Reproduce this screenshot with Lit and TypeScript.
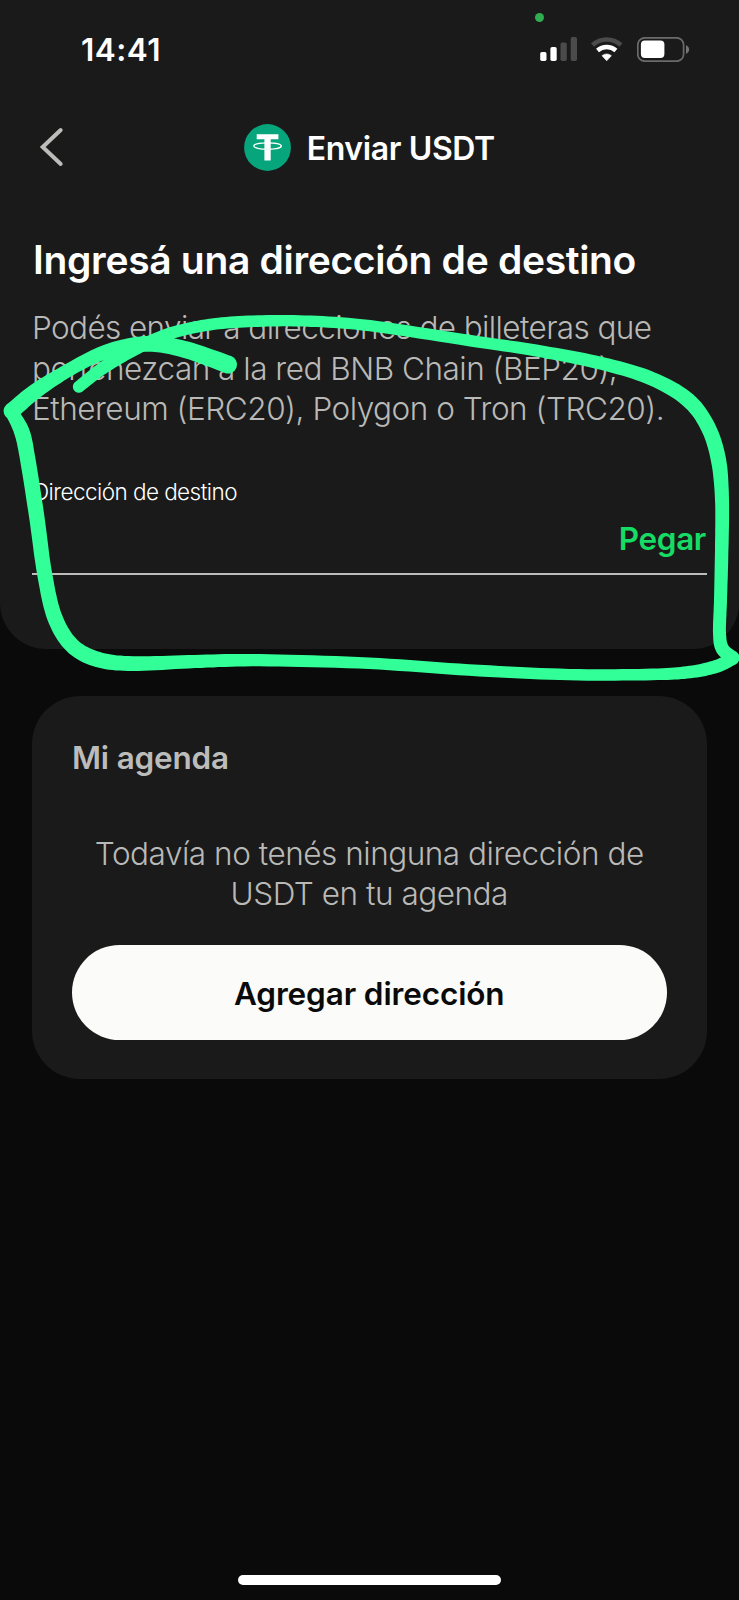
import { LitElement, html, css, svg } from "lit";
import { customElement } from "lit/decorators.js";

type Knot = [x: number, y: number, width: number];

const MARKS: Knot[][] = [
  [[78.5, 387, 12], [103, 368, 12.5], [135, 349, 13], [170, 333.5, 12], [210, 324.6, 11.7], [253, 321.3, 11.7], [305, 321, 11.3], [370, 325.7, 11.3], [469, 340.5, 11.5], [536, 350.5, 12], [602, 363.5, 13], [652, 378.8, 14], [688, 400, 15], [708, 427, 15], [718.5, 460, 15.2], [722, 500, 14], [721.7, 550, 13.5], [720.5, 600, 13], [719.5, 633, 13], [722.5, 649, 13.5], [733, 657.5, 13]],
  [[733, 658.5, 13], [716, 666.5, 13], [690, 672, 12.5], [652, 674.4, 11.7], [569, 674.6, 11.5], [469, 670, 11.7], [369, 663.3, 11.6], [260, 660.2, 12.3], [195, 661.5, 13.3], [133, 663.6, 14.7], [98, 659.5, 15.5], [72, 645.5, 15.5], [54.6, 617, 15.3], [44.5, 573, 15], [36.5, 515, 15.3], [27, 455, 15.5], [21.5, 431, 15.5], [11.5, 412, 13]],
  [[11.3, 411.5, 16.5], [35, 391.5, 15.5], [67, 371, 13.5], [100, 354, 14], [128, 346, 15], [155, 344, 16], [187, 350, 17], [228, 364.5, 18]],
];

/** Outline of a freehand stroke whose width varies between its knots. */
function brush(knots: Knot[]): string {
  const samples: Knot[] = [];
  const at = (i: number) => knots[Math.max(0, Math.min(knots.length - 1, i))];
  for (let i = 0; i < knots.length - 1; i++) {
    const [a, b, c, d] = [at(i - 1), at(i), at(i + 1), at(i + 2)];
    for (let s = 0; s < 10; s++) {
      const t = s / 10;
      samples.push([0, 1, 2].map((k) =>
        0.5 * (2 * b[k] + (c[k] - a[k]) * t + (2 * a[k] - 5 * b[k] + 4 * c[k] - d[k]) * t * t +
          (3 * b[k] - a[k] - 3 * c[k] + d[k]) * t * t * t)) as Knot);
    }
  }
  samples.push(knots[knots.length - 1]);
  const left: string[] = [];
  const right: string[] = [];
  samples.forEach(([x, y, w], i) => {
    const p = samples[Math.max(0, i - 1)];
    const q = samples[Math.min(samples.length - 1, i + 1)];
    const len = Math.hypot(q[0] - p[0], q[1] - p[1]) || 1;
    const nx = ((q[1] - p[1]) / len) * (w / 2);
    const ny = (-(q[0] - p[0]) / len) * (w / 2);
    left.push(`${(x + nx).toFixed(1)} ${(y + ny).toFixed(1)}`);
    right.unshift(`${(x - nx).toFixed(1)} ${(y - ny).toFixed(1)}`);
  });
  const r0 = knots[0][2] / 2;
  const r1 = knots[knots.length - 1][2] / 2;
  return `M${left.join("L")}A${r1} ${r1} 0 0 1 ${right[0]}L${right.join("L")}A${r0} ${r0} 0 0 1 ${left[0]}Z`;
}

@customElement("status-bar")
export class StatusBar extends LitElement {
  static styles = css`
    :host { display: flex; position: relative; justify-content: space-between; height: 80px; padding: 0 49.5px 0 81px; }
    .time { margin-top: 30px; font-size: 31.5px; line-height: 39px; font-weight: 600; letter-spacing: 0.5px; }
    .icons { display: flex; gap: 14px; margin-top: 37px; height: 25px; }
    .recording { position: absolute; left: 535.3px; top: 12.6px; width: 9.2px; height: 9.2px; border-radius: 50%; background: #30ad50; }
  `;
  render() {
    return html`
      <div class="time">14:41</div>
      <i class="recording"></i>
      <div class="icons">
        <svg width="37.5" height="25" viewBox="0 0 37.5 25">
          <g fill="#fff"><rect x="0.2" y="15" width="6.3" height="9" rx="1.7" /><rect x="10.4" y="10" width="6.3" height="14" rx="1.7" /></g>
          <g fill="#4b4b4b"><rect x="20.5" y="5.4" width="6.3" height="18.6" rx="1.7" /><rect x="30.7" y="0" width="6.3" height="24" rx="1.7" /></g>
        </svg>
        <svg width="31.5" height="25" viewBox="0 0 31.5 25" fill="none">
          <path d="M1.5 8A21.2 21.2 0 0 1 29.9 8" stroke="#4b4b4b" stroke-width="4.6" />
          <path d="M6.5 13.5A13.8 13.8 0 0 1 24.9 13.5" stroke="#fff" stroke-width="4.4" />
          <path d="M11 18.7A7.2 7.2 0 0 1 20.4 18.7L15.7 23.8Z" fill="#fff" stroke="#fff" stroke-width="0.6" stroke-linejoin="round" />
        </svg>
        <svg width="53" height="25" viewBox="0 0 53 25">
          <rect x="0.8" y="0.8" width="45.8" height="23.4" rx="7" fill="none" stroke="#6b6b6b" stroke-width="1.7" />
          <rect x="3.9" y="3.6" width="23.5" height="17.5" rx="4" fill="#fff" />
          <path d="M49 8.3C53.2 9.8 53.2 15.2 49 16.7Z" fill="#757575" />
        </svg>
      </div>`;
  }
}

@customElement("app-root")
export class AppRoot extends LitElement {
  static styles = css`
    :host { display: flex; flex-direction: column; position: relative; width: 739px; height: 1600px; overflow: hidden; background: #0a0a0a; color: #fff; font-family: Inter, "Liberation Sans", sans-serif; }
    .panel { box-sizing: border-box; height: 649px; background: #1a1a1a; border-radius: 0 0 46px 46px; }
    .nav { position: relative; display: flex; justify-content: center; align-items: center; height: 134px; }
    .back { position: absolute; left: 38px; top: 46px; display: block; }
    .title { display: flex; align-items: center; gap: 15.5px; font-size: 32px; line-height: 40px; font-weight: 600; letter-spacing: -0.37px; }
    .title svg { display: block; }
    .title span { padding-top: 3px; }
    .content { padding: 0 32px; }
    h1 { margin: 22px 0 0 1px; font-size: 39px; line-height: 48px; font-weight: 600; letter-spacing: -0.32px; white-space: nowrap; }
    .text { margin: 0; font-size: 31.5px; line-height: 40.6px; font-weight: 300; color: #b9b9b7; white-space: nowrap; }
    .intro { margin-top: 24px; }
    .row { display: block; }
    .l1 { letter-spacing: -0.61px; }
    .l2 { letter-spacing: -0.49px; }
    .l3 { letter-spacing: -0.48px; }
    .label { margin: 47.5px 0 0 1px; font-size: 22.5px; line-height: 30px; font-weight: 300; letter-spacing: -0.56px; }
    .field { display: flex; justify-content: flex-end; box-sizing: border-box; height: 68px; padding: 12px 1px 0 0; border-bottom: 2px solid #bcbcba; color: #16db65; font-size: 31.5px; line-height: 40px; font-weight: 600; letter-spacing: -0.37px; }
    .card { box-sizing: border-box; height: 383px; margin: 47px 32.5px 0 32px; padding: 41px 40px 40px; border-radius: 48px; background: #1a1a1a; }
    h2 { margin: 0; font-size: 31.5px; line-height: 42px; font-weight: 600; letter-spacing: -0.2px; color: #bcbcba; }
    .empty { margin-top: 54.5px; text-align: center; letter-spacing: -0.47px; }
    .button { display: flex; align-items: center; justify-content: center; box-sizing: border-box; height: 95px; margin-top: 30px; padding-top: 3px; border-radius: 48px; background: #fbfbf9; color: #0a0a0a; font-size: 31.5px; font-weight: 600; letter-spacing: -0.12px; }
    .home { width: 263.5px; height: 9.5px; margin: auto auto 15.5px; border-radius: 5px; background: #fff; }
    .marks { position: absolute; left: 0; top: 0; pointer-events: none; }
  `;
  render() {
    return html`
      <section class="panel">
        <status-bar></status-bar>
        <div class="nav">
          <svg class="back" width="28" height="42" viewBox="0 0 28 42" fill="none" stroke="#bcbcba" stroke-width="4" stroke-linecap="round"><path d="M22.7 4L4.7 21L22.7 38" /></svg>
          <div class="title">
            <svg width="47" height="47" viewBox="0 0 47 47">
              <circle cx="23.5" cy="23.5" r="23.4" fill="#06a57b" />
              <path d="M12.7 10.2H34.4V15.3H26.7V36.5H20.4V15.3H12.7Z" fill="#fff" />
              <path d="M20.4 25.2Q23.5 25.6 26.7 25.2" fill="none" stroke="#06a57b" stroke-opacity="0.45" stroke-width="0.8" />
              <ellipse cx="23.5" cy="22" rx="13.8" ry="3.2" fill="none" stroke="#fff" stroke-width="1.3" />
            </svg>
            <span>Enviar USDT</span>
          </div>
        </div>
        <div class="content">
          <h1>Ingresá una dirección de destino</h1>
          <p class="text intro">
            <span class="row l1">Podés enviar a direcciones de billeteras que</span>
            <span class="row l2">pertenezcan a la red BNB Chain (BEP20),</span>
            <span class="row l3">Ethereum (ERC20), Polygon o Tron (TRC20).</span>
          </p>
          <div class="label">Dirección de destino</div>
          <div class="field">Pegar</div>
        </div>
      </section>
      <section class="card">
        <h2>Mi agenda</h2>
        <p class="text empty">Todavía no tenés ninguna dirección de<br />USDT en tu agenda</p>
        <div class="button">Agregar dirección</div>
      </section>
      <div class="home"></div>
      <svg class="marks" width="739" height="700" viewBox="0 0 739 700" fill="#33ff99">${MARKS.map((knots) => svg`<path d=${brush(knots)} />`)}</svg>`;
  }
}
